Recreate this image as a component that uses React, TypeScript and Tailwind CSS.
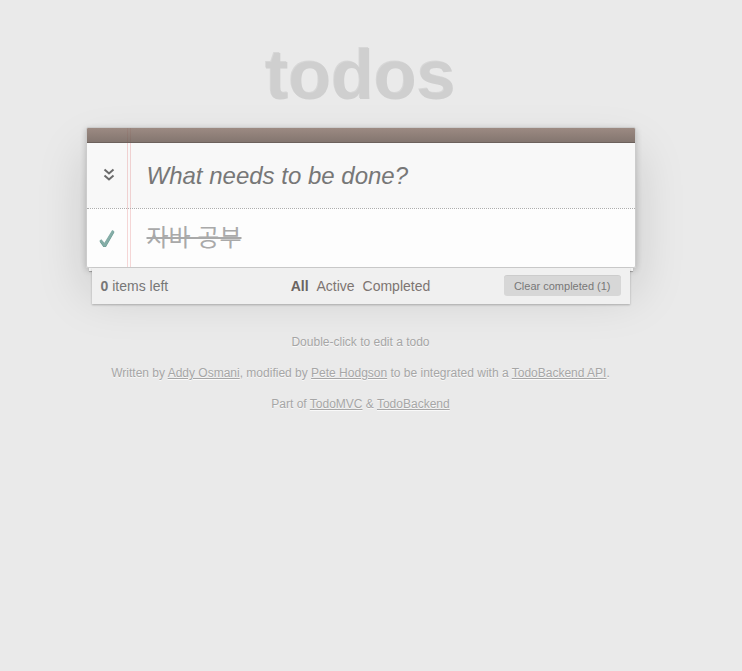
import React from "react";

function ToggleAllIcon() {
  return (
    <svg width="12" height="14" viewBox="0 0 12 14" className="absolute left-[16px] top-[25px]">
      <path d="M1.5 1.5 L6 5.5 L10.5 1.5" fill="none" stroke="#6b6b6b" strokeWidth="2" />
      <path d="M1.5 7.5 L6 11.5 L10.5 7.5" fill="none" stroke="#6b6b6b" strokeWidth="2" />
    </svg>
  );
}

function CheckIcon() {
  return (
    <svg width="16" height="18" viewBox="0 0 16 18" className="absolute left-[12px] top-[20px]">
      <path d="M0.5 11.4 L2.4 10.2 L5.4 13.8 L13.2 1 L15.4 2.2 L6.6 17.6 L4.8 17.6 Z" fill="#669991" transform="translate(0 1)" />
      <path d="M0.5 11.4 L2.4 10.2 L5.4 13.8 L13.2 1 L15.4 2.2 L6.6 17.6 L4.8 17.6 Z" fill="#85ada7" />
    </svg>
  );
}

export default function App() {
  return (
    <div className="min-h-[671px] w-full bg-[#eaeaea] font-['Liberation_Sans','Noto_Sans_CJK_KR',sans-serif] text-[14px] text-[#4d4d4d]">
      <div className="w-[721px] pt-[40px]">
        <div className="mx-auto w-[550px]">
          <h1 className="mb-[17px] h-[70px] text-center text-[70px] font-bold leading-[70px] text-[#cfcfcf] [text-shadow:-1px_-1px_rgba(0,0,0,0.08)]">
            todos
          </h1>

          {/* app card */}
          <section className="relative rounded-[2px] border border-[#ccc] bg-white/90 shadow-[0_2px_6px_0_rgba(0,0,0,0.2),0_25px_50px_0_rgba(0,0,0,0.15)]">
            <div className="absolute left-[40px] top-0 z-0 h-full w-[4px] border-x border-[#f5d6d6]"></div>

            <header className="relative">
              <div className="relative z-10 h-[15px] rounded-t-[1px] border-b border-[#6c615c] bg-gradient-to-b from-[rgba(132,110,100,0.8)] to-[rgba(101,84,76,0.8)]"></div>
              <div className="relative bg-black/[0.02]">
                <ToggleAllIcon />
                <input
                  className="block w-full bg-transparent py-[16px] pl-[60px] pr-4 text-[24px] leading-[33px] text-[#4d4d4d] outline-none placeholder:italic placeholder:text-[#777]"
                  placeholder="What needs to be done?"
                />
              </div>
            </header>

            <div className="relative border-t border-dotted border-[#adadad]">
              <ul>
                <li className="relative">
                  <CheckIcon />
                  <label className="ml-[45px] block py-[15px] pl-[15px] pr-[60px] text-[24px] leading-[28px] text-[#a9a9a9] line-through">
                    자바 공부
                  </label>
                </li>
              </ul>
            </div>
          </section>

          {/* footer panel */}
          <div className="relative">
            <div className="absolute left-[3px] right-[3px] top-0 h-[3px] bg-white/80 shadow-[0_1px_1px_rgba(0,0,0,0.25)]"></div>
            <footer className="relative mx-[6px] flex h-[36px] items-center bg-[#f0f0f0] px-[9px] text-[#777] shadow-[0_1px_2px_rgba(0,0,0,0.25)]">
              <span className="relative z-10">
                <strong className="font-bold">0</strong> items left
              </span>
              <ul className="absolute inset-x-0 text-center">
                <li className="inline">
                  <a className="mx-[2px] font-bold text-[#6a6461]">All</a>
                </li>{" "}
                <li className="inline">
                  <a className="mx-[2px] text-[#7d7572]">Active</a>
                </li>{" "}
                <li className="inline">
                  <a className="mx-[2px] text-[#7d7572]">Completed</a>
                </li>
              </ul>
              <button className="relative z-10 ml-auto h-[20px] rounded-[3px] bg-black/10 px-[10px] text-[11px] leading-[20px] text-[#777] shadow-[0_-1px_0_0_rgba(0,0,0,0.15)]">
                Clear completed (1)
              </button>
            </footer>
          </div>
        </div>

        <div className="mt-[31px] flex flex-col gap-[16px] text-center text-[12px] leading-[15px] text-[#a6a6a6] [text-shadow:0_1px_0_rgba(255,255,255,0.7)]">
          <p>Double-click to edit a todo</p>
          <p>
            Written by <a className="underline">Addy Osmani</a>, modified by{" "}
            <a className="underline">Pete Hodgson</a> to be integrated with a{" "}
            <a className="underline">TodoBackend API</a>.
          </p>
          <p>
            Part of <a className="underline">TodoMVC</a> &amp; <a className="underline">TodoBackend</a>
          </p>
        </div>
      </div>
    </div>
  );
}
